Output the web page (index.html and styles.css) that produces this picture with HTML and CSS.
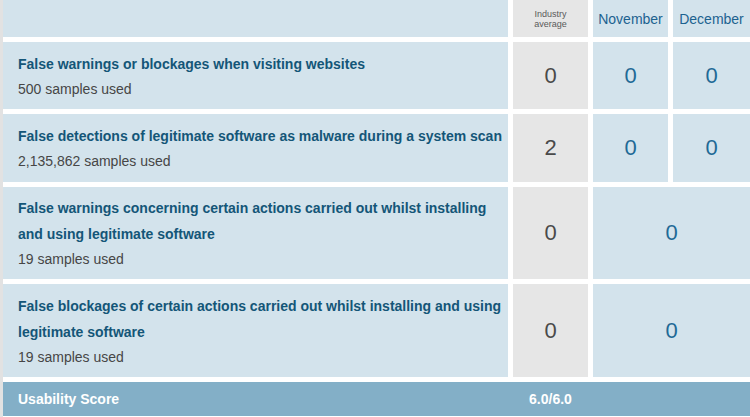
FILE: index.html
```html
<!DOCTYPE html>
<html>
<head>
<meta charset="utf-8">
<link rel="stylesheet" href="styles.css">
</head>
<body>
<div class="page">
  <div class="grid">
    <div class="cell head-label"></div>
    <div class="cell grey head-ind">Industry<br>average</div>
    <div class="cell blue head-month">November</div>
    <div class="cell blue head-month">December</div>

    <div class="cell label r1">
      <div class="title">False warnings or blockages when visiting websites</div>
      <div class="samples">500 samples used</div>
    </div>
    <div class="cell grey num ind">0</div>
    <div class="cell blue num">0</div>
    <div class="cell blue num">0</div>

    <div class="cell label r2">
      <div class="title">False detections of legitimate software as malware during a system scan</div>
      <div class="samples">2,135,862 samples used</div>
    </div>
    <div class="cell grey num ind">2</div>
    <div class="cell blue num">0</div>
    <div class="cell blue num">0</div>

    <div class="cell label r3">
      <div class="title">False warnings concerning certain actions carried out whilst installing and using legitimate software</div>
      <div class="samples">19 samples used</div>
    </div>
    <div class="cell grey num ind">0</div>
    <div class="cell blue num span2">0</div>

    <div class="cell label r4">
      <div class="title">False blockages of certain actions carried out whilst installing and using legitimate software</div>
      <div class="samples">19 samples used</div>
    </div>
    <div class="cell grey num ind">0</div>
    <div class="cell blue num span2">0</div>

    <div class="footer">
      <div class="foot-label">Usability Score</div>
      <div class="foot-score">6.0/6.0</div>
    </div>
  </div>
</div>
</body>
</html>
```

FILE: styles.css
```css
html, body {
  margin: 0;
  padding: 0;
  background: #ffffff;
}
body {
  font-family: "Liberation Sans", Arial, sans-serif;
  width: 750px;
  height: 417px;
  overflow: hidden;
}
.page {
  display: flex;
  height: 417px;
  border-left: 3px solid #e2e2e2;
}
.grid {
  flex: 1;
  display: grid;
  grid-template-columns: 505px 75px 75px 1fr;
  grid-template-rows: 37px 67px 68px 92px 93px 34px;
  gap: 5px;
}
.cell {
  display: flex;
  align-items: center;
  justify-content: center;
}
.blue { background: #d3e3ec; }
.grey { background: #e6e6e6; }
.head-label { background: #d3e3ec; }
.head-ind {
  font-size: 9px;
  line-height: 10px;
  color: #5a5a5a;
  text-align: center;
}
.head-month {
  font-size: 14px;
  color: #1c6290;
}
.label {
  background: #d3e3ec;
  flex-direction: column;
  align-items: flex-start;
  justify-content: center;
  padding: 0 0 0 15px;
}
.title {
  font-size: 14px;
  font-weight: bold;
  line-height: 26px;
  color: #145678;
}
.samples {
  font-size: 14px;
  line-height: 24px;
  color: #464646;
}
.num {
  font-size: 22px;
  color: #1f6a96;
}
.num.ind { color: #4a4a4a; }
.span2 { grid-column: span 2; }
.footer {
  grid-column: 1 / -1;
  background: #83afc7;
  display: grid;
  grid-template-columns: 505px 75px 1fr;
  gap: 5px;
  align-items: center;
  color: #ffffff;
  font-size: 14px;
  font-weight: bold;
}
.foot-label { padding-left: 15px; }
.foot-score { text-align: center; }
```
